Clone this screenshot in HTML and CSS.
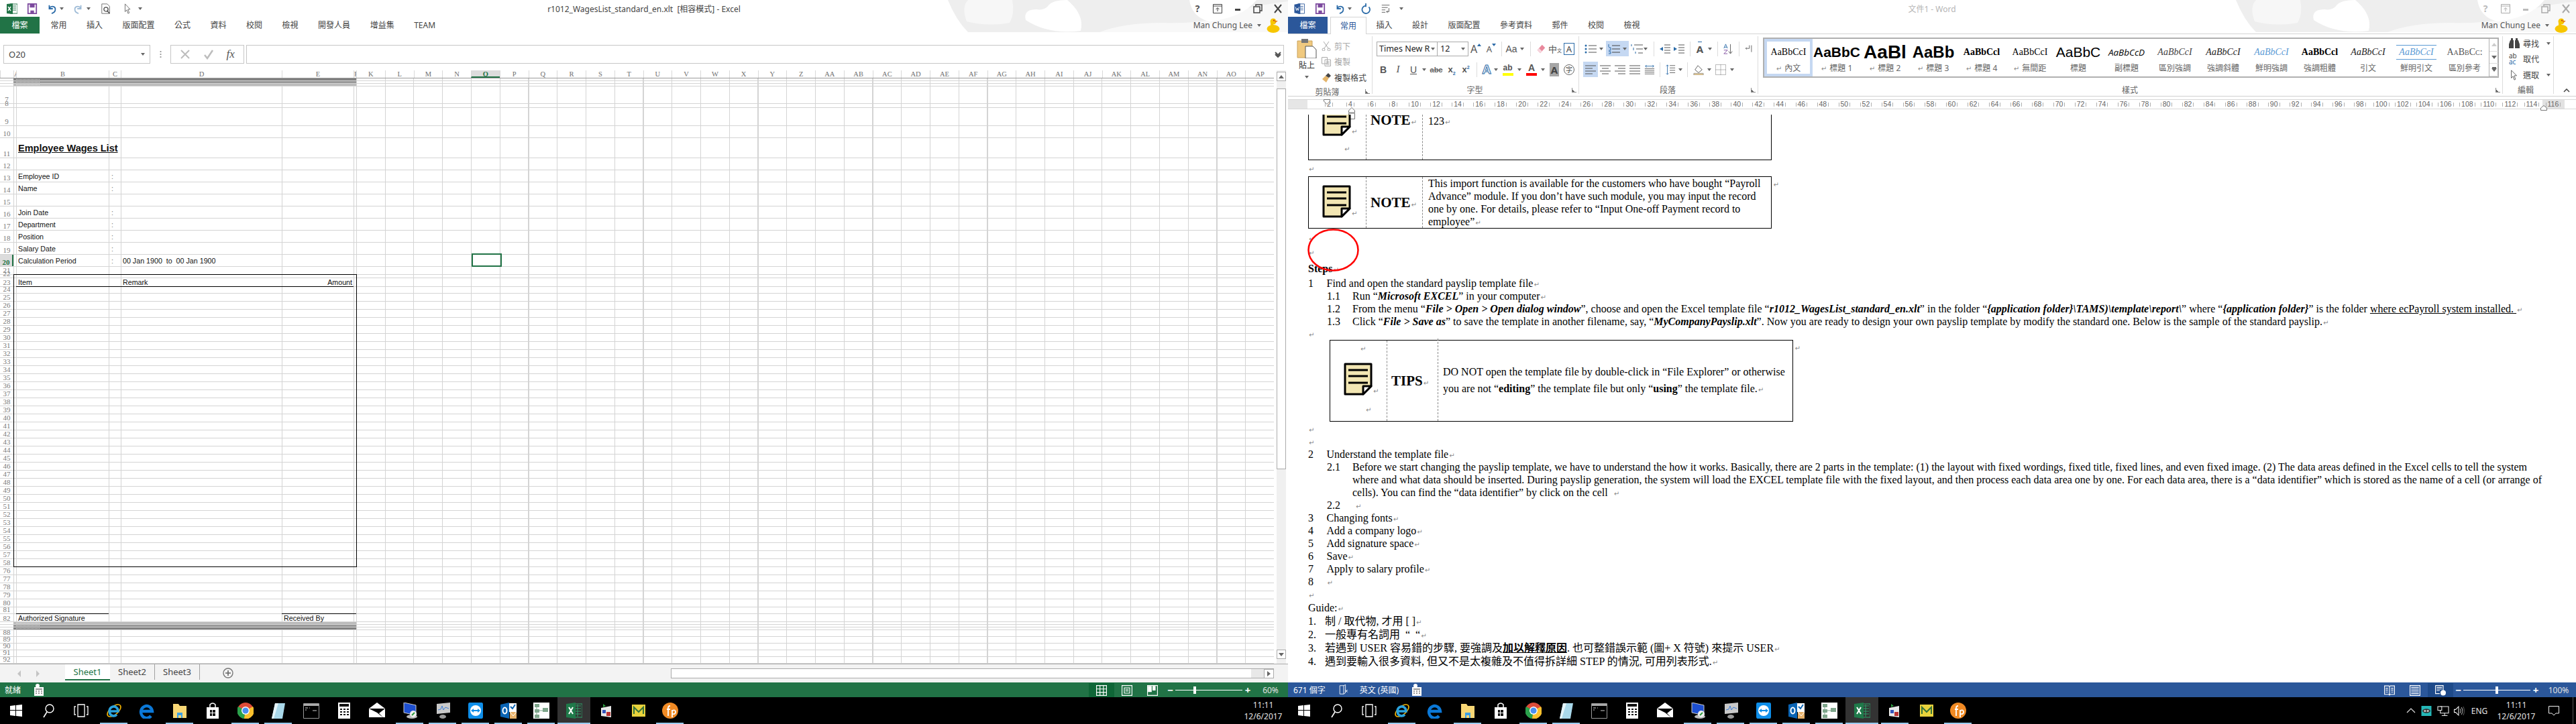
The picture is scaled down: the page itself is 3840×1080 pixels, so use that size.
FILE: index.html
```html
<!DOCTYPE html>
<html lang="en">
<head>
  <meta charset="UTF-8">
  <title>Excel and Word side by side</title>
  <link rel="stylesheet" href="styles.css">
</head>
<body>

<svg class="defs" aria-hidden="true">
  <symbol id="hearts" viewBox="0 0 507 48">
    <path d="M0 0H507V48H30Q12 30 0 0Z" fill="#eeeeee"/>
    <path d="M28 32Q20 10 30 0H96Q100 20 92 34Q60 40 28 32Z" fill="#f7f7f7"/>
    <path d="M116 30Q112 14 132 14Q144 16 150 8Q156 0 178 0Q204 22 198 46Q150 52 116 30Z" fill="#ffffff"/>
    <path d="M226 48Q262 34 320 34Q400 36 430 16Q470 6 507 2V48Z" fill="#f8f8f8"/>
    <path d="M360 0H460Q440 26 390 32Q364 26 360 0Z" fill="#ffffff"/>
  </symbol>
  <symbol id="note" viewBox="0 0 43 49">
    <path d="M2 2H41V35L29 47H2Z" fill="#f2e6b3" stroke="#000" stroke-width="3" stroke-linejoin="round"/>
    <path d="M7 11H36M7 20H36M7 30H36" stroke="#000" stroke-width="3"/>
    <path d="M29 47V35H41Z" fill="#fff" stroke="#000" stroke-width="3" stroke-linejoin="round"/>
  </symbol>
  <symbol id="save" viewBox="0 0 16 18">
    <path d="M1 1H15V17H1Z" fill="#fff" stroke="#7d4a9e" stroke-width="2"/>
    <path d="M4 1H12V7H4Z" fill="#7d4a9e"/>
    <path d="M5 12H11V17H5Z" fill="#7d4a9e"/>
  </symbol>
  <symbol id="undo" viewBox="0 0 16 18">
    <path d="M4 3V9H10M4 8C8 3 15 5 14 11C14 14 11 16 8 17" fill="none" stroke="#2b6ba8" stroke-width="2"/>
  </symbol>
  <symbol id="macro" viewBox="0 0 14 18">
    <path d="M0 5H14V18H0Z" fill="#fff"/>
    <circle cx="5" cy="3" r="3" fill="#fff"/>
    <path d="M2 8H12M2 11H4M6 11H8M10 11H12M2 14H4M6 14H8M10 14H12" stroke="#333" stroke-width="1.2"/>
  </symbol>
  <symbol id="t-start" viewBox="0 0 24 24">
    <path d="M3 5L11 4V11H3ZM12 4L21 3V11H12ZM3 12H11V20L3 19ZM12 12H21V21L12 20Z" fill="#fff"/>
  </symbol>
  <symbol id="t-search" viewBox="0 0 24 24">
    <circle cx="14" cy="9" r="6" fill="none" stroke="#fff" stroke-width="1.4"/>
    <path d="M10 14L5 22" stroke="#fff" stroke-width="1.6"/>
  </symbol>
  <symbol id="t-view" viewBox="0 0 24 24">
    <path d="M7 3H17V21H7ZM4 6H2V18H4M20 6H22V18H20" fill="none" stroke="#fff" stroke-width="1.3"/>
  </symbol>
  <symbol id="t-ie" viewBox="0 0 24 24">
    <ellipse cx="12" cy="12" rx="12" ry="6" transform="rotate(-40 12 12)" fill="none" stroke="#f4b400" stroke-width="1.6"/>
    <path d="M5 13H18A6.5 7 0 1 0 16 18" fill="none" stroke="#2ba3dd" stroke-width="3.6"/>
  </symbol>
  <symbol id="t-edge" viewBox="0 0 24 24">
    <path d="M3 13H20A8.5 9 0 1 0 18 20" fill="none" stroke="#0b78d7" stroke-width="4.4"/>
  </symbol>
  <symbol id="t-folder" viewBox="0 0 24 24">
    <path d="M2 2H10L12 5H22V23H2Z" fill="#f8d775"/>
    <path d="M8 15H16V23H14V19H10V23H8Z" fill="#3ba0e6"/>
  </symbol>
  <symbol id="t-store" viewBox="0 0 24 24">
    <path d="M3 7H21V24H3Z" fill="#fff"/>
    <path d="M8 7V3Q12 -1 16 3V7" fill="none" stroke="#fff" stroke-width="1.5"/>
    <path d="M8 11H11V15H8ZM12 11H16V15H12ZM8 16H11V20H8ZM12 16H16V20H12Z" fill="#111"/>
  </symbol>
  <symbol id="t-chrome" viewBox="0 0 24 24">
    <circle cx="12" cy="12" r="12" fill="#dd4b39"/>
    <path d="M12 12L1 6A12 12 0 0 0 10 24Z" fill="#2aa14b"/>
    <path d="M12 12L23 6A12 12 0 0 1 10 24Z" fill="#fbc02d"/>
    <circle cx="12" cy="12" r="6" fill="#fff"/>
    <circle cx="12" cy="12" r="4.6" fill="#4a8ef0"/>
  </symbol>
  <symbol id="t-note" viewBox="0 0 24 24">
    <path d="M7 1H22L18 24H2Z" fill="#a9d8ea"/>
    <path d="M7 1H12L5 24H2Z" fill="#e5f4f9"/>
  </symbol>
  <symbol id="t-cmd" viewBox="0 0 24 24">
    <path d="M.5 1.500H23.500V23.500H.5Z" fill="#000" stroke="#999"/>
    <path d="M1 2H23V5H1Z" fill="#aaa"/>
    <path d="M3 8H7M9 8H10M3 11H5M14 12H20" stroke="#ccc"/>
  </symbol>
  <symbol id="t-calc" viewBox="0 0 24 24">
    <path d="M3 0H21V24H3Z" fill="#fff"/>
    <path d="M5 2H19V6H5ZM6 9H9V11H6ZM11 9H14V11H11ZM16 9H19V11H16ZM6 13H9V15H6ZM11 13H14V15H11ZM16 13H19V15H16ZM6 17H9V19H6ZM11 17H14V19H11ZM16 17H19V19H16Z" fill="#111"/>
  </symbol>
  <symbol id="t-mail" viewBox="0 0 24 24">
    <path d="M0 9L12 0L24 9V22H0Z" fill="#fff"/>
    <path d="M0 9H24L15 16L22 23L12 15Z" fill="#000"/>
  </symbol>
  <symbol id="t-pc" viewBox="0 0 24 24">
    <path d="M3 0L21 4V19L3 15Z" fill="#1d4fd0" stroke="#ccc"/>
    <ellipse cx="15" cy="21" rx="8" ry="3" fill="#bbb"/>
    <circle cx="17" cy="17" r="5" fill="#eee"/>
    <path d="M15 19L19 15" stroke="#2a9a3c" stroke-width="2"/>
  </symbol>
  <symbol id="t-perf" viewBox="0 0 24 24">
    <path d="M3 2L23 0V15L3 17Z" fill="#c9c9c9"/>
    <path d="M5 11L9 10L11 5L13 11L16 7L21 9" fill="none" stroke="#3d7fd9"/>
    <ellipse cx="12" cy="21" rx="5" ry="3" fill="#999"/>
  </symbol>
  <symbol id="t-tv" viewBox="0 0 24 24">
    <path d="M3 0H21Q23 0 23 3V21Q23 24 21 24H3Q1 24 1 21V3Q1 0 3 0Z" fill="#0e8ee9"/>
    <circle cx="12" cy="12" r="8" fill="#fff"/>
    <path d="M5 12L9 9V11H15V9L19 12L15 15V13H9V15Z" fill="#0e8ee9"/>
  </symbol>
  <symbol id="t-ol" viewBox="0 0 24 24">
    <path d="M8 1H24V14H8Z" fill="#fff"/>
    <path d="M0 3L13 0V24L0 21Z" fill="#0a64b4"/>
    <ellipse cx="6.500" cy="12" rx="3" ry="4.400" fill="none" stroke="#fff" stroke-width="2"/>
    <path d="M15 6L18 9L22 3" fill="none" stroke="#0a64b4" stroke-width="2"/>
    <path d="M14 14H24V24H14Z" fill="#e8b26a"/>
    <path d="M14 14L19 20L24 14" fill="none" stroke="#fff"/>
  </symbol>
  <symbol id="t-tree" viewBox="0 0 24 24">
    <path d="M0 0H24V24H0Z" fill="#fff"/>
    <path d="M2 2H9V7H2ZM2 10H9V15H2ZM14 8H22V14H14ZM2 18H9V23H2Z" fill="#7fa68c"/>
    <path d="M5 7V20M5 12H18" stroke="#7fa68c"/>
  </symbol>
  <symbol id="t-xl" viewBox="0 0 24 24">
    <path d="M9 2H24V22H9Z" fill="none" stroke="#2fa36b"/>
    <path d="M12 5H22M12 9H22M12 13H22M12 17H22M17 3V21" stroke="#2fa36b"/>
    <path d="M0 2L14 0V24L0 22Z" fill="#1f7a4a"/>
    <path d="M4 7L10 17M10 7L4 17" stroke="#fff" stroke-width="2"/>
  </symbol>
  <symbol id="t-app" viewBox="0 0 24 24">
    <path d="M3 8L18 5V22L3 20Z" fill="#e8e8e8"/>
    <path d="M5 11H10V16H5Z" fill="#3355bb"/>
    <path d="M11 14H17V20H11Z" fill="#bb3333"/>
    <path d="M6 2L10 5L6 7" fill="#2a9a3c"/>
  </symbol>
  <symbol id="t-yel" viewBox="0 0 24 24">
    <path d="M2 3H22V21H2Z" fill="#e8d23c"/>
    <path d="M5 17V7L12 14L19 7V17" fill="none" stroke="#36733a" stroke-width="2"/>
  </symbol>
  <symbol id="t-fp" viewBox="0 0 24 24">
    <circle cx="12" cy="12" r="12" fill="#f08a24"/>
    <path d="M9 20V8Q9 5 12 5M7 10H12M15 22V11M15 12Q20 10 20 14T15 17" fill="none" stroke="#fff" stroke-width="1.800"/>
  </symbol>
</svg>

<main class="desktop">

  <!-- Excel -->
  <section class="window excel">
    <svg class="hearts"><use href="#hearts"/></svg>
    <header class="titlebar">
      <div class="qat qat-x">
        <svg class="i16" viewBox="0 0 16 16"><path d="M5 1H16V15H5Z" fill="#fff" stroke="#217346"/><path d="M9 4H14M9 7H14M9 10H14" stroke="#217346"/><path d="M0 1L9 0V16L0 15Z" fill="#217346"/><path d="M2 5L6 11M6 5L2 11" stroke="#fff" stroke-width="1.400"/></svg>
        <svg class="i16"><use href="#save"/></svg>
        <svg class="i16"><use href="#undo"/></svg>
        <span class="dd"></span>
        <svg class="i16 faded"><use href="#undo" transform="matrix(-1 0 0 1 16 0)"/></svg>
        <span class="dd"></span>
        <svg class="i16" viewBox="0 0 16 18"><path d="M1 1H10L14 5V17H1Z" fill="#fff" stroke="#666"/><circle cx="8" cy="10" r="3.500" fill="none" stroke="#444" stroke-width="1.400"/><path d="M10.500 13L14 17" stroke="#444" stroke-width="1.600"/></svg>
        <svg class="i16" viewBox="0 0 10 18"><path d="M1 1V14L4 11L6 17L8 16L6 10H9.500Z" fill="#fff" stroke="#666"/></svg>
        <span class="dd dd-line"></span>
      </div>
      <div class="doc-title">r1012_WagesList_standard_en.xlt &nbsp;[相容模式] - Excel</div>
      <div class="win-ctl">
        <span class="ctl-q">?</span>
        <svg class="i14" viewBox="0 0 14 14"><path d="M.5 .5H13.500V13.500H.5ZM1 3H13" fill="none" stroke="#444"/><path d="M7 11V6M4.500 8L7 5.500L9.500 8" fill="none" stroke="#444"/></svg>
        <span class="ctl-min"></span>
        <svg class="i14" viewBox="0 0 14 14"><path d="M4 3V1H13V10H10M1 4H10V13H1Z" fill="none" stroke="#444" stroke-width="1.500"/></svg>
        <svg class="i14" viewBox="0 0 14 14"><path d="M2 1L12 13M12 1L2 13" stroke="#444" stroke-width="2"/></svg>
      </div>
    </header>
    <nav class="tabs-row">
      <span class="file-tab">檔案</span>
      <span class="tab">常用</span>
      <span class="tab">插入</span>
      <span class="tab">版面配置</span>
      <span class="tab">公式</span>
      <span class="tab">資料</span>
      <span class="tab">校閱</span>
      <span class="tab">檢視</span>
      <span class="tab">開發人員</span>
      <span class="tab">增益集</span>
      <span class="tab">TEAM</span>
      <div class="user">
        <span>Man Chung Lee</span>
        <span class="dd"></span>
        <svg class="duck" viewBox="0 0 20 22"><ellipse cx="10" cy="16" rx="9.500" ry="6" fill="#f7c600"/><circle cx="10" cy="5" r="4.500" fill="#f7c600"/><path d="M6 6H10V14H6Z" fill="#f7c600"/><path d="M12 4H17L13 7Z" fill="#e8791a"/><circle cx="11" cy="3.500" r="1" fill="#c02020"/></svg>
      </div>
    </nav>

    <div class="formula-bar">
      <div class="name-box"><span>O20</span><span class="dd"></span></div>
      <div class="fx-dots"></div>
      <div class="fx-btns">
        <svg class="i16" viewBox="0 0 16 16"><path d="M2 2L14 14M14 2L2 14" stroke="#bdbdbd" stroke-width="2"/></svg>
        <svg class="i16" viewBox="0 0 16 16"><path d="M2 9L6 14L14 2" fill="none" stroke="#bdbdbd" stroke-width="2.500"/></svg>
        <i class="fx">fx</i>
      </div>
      <div class="fx-input"><svg class="i10" viewBox="0 0 10 10"><path d="M1 2L5 6L9 2M1 5L5 9L9 5" fill="none" stroke="#555" stroke-width="2"/></svg></div>
    </div>

    <div class="sheet">
      <div class="cells">
        <div class="colhead">
          <span></span><span>A</span><span>B</span><span>C</span><span>D</span><span>E</span><span>F</span>
          <span>K</span><span>L</span><span>M</span><span>N</span><span class="cur">O</span><span>P</span><span>Q</span><span>R</span><span>S</span><span>T</span><span>U</span><span>V</span><span>W</span><span>X</span><span>Y</span><span>Z</span>
          <span>AA</span><span>AB</span><span>AC</span><span>AD</span><span>AE</span><span>AF</span><span>AG</span><span>AH</span><span>AI</span><span>AJ</span><span>AK</span><span>AL</span><span>AM</span><span>AN</span><span>AO</span><span>AP</span>
        </div>
        <div class="rows">
          <div class="row tiny"><b></b><em class="bar b1"></em></div>
          <div class="row tiny"><b></b><em class="bar b2"></em></div>
          <div class="row tiny"><b></b><em class="bar b3"></em></div>
          <div class="row h26"><b>7</b></div>
          <div class="row h6"><b>8</b></div>
          <div class="row h27"><b>9</b></div>
          <div class="row h18"><b>10</b></div>
          <div class="row h30"><b>11</b><span class="cb title">Employee Wages List</span></div>
          <div class="row h18"><b>12</b></div>
          <div class="row h18"><b>13</b><span class="cb">Employee ID</span><span class="cc">:</span></div>
          <div class="row h18"><b>14</b><span class="cb">Name</span><span class="cc">:</span></div>
          <div class="row h18"><b>15</b></div>
          <div class="row h18"><b>16</b><span class="cb">Join Date</span><span class="cc">:</span></div>
          <div class="row h18"><b>17</b><span class="cb">Department</span><span class="cc">:</span></div>
          <div class="row h18"><b>18</b><span class="cb">Position</span><span class="cc">:</span></div>
          <div class="row h18"><b>19</b><span class="cb">Salary Date</span><span class="cc">:</span></div>
          <div class="row h18 cur"><b>20</b><span class="cb">Calculation Period</span><span class="cc">:</span><span class="cd">00 Jan 1900 &nbsp;to &nbsp;00 Jan 1900</span></div>
          <div class="row h12"><b>21</b></div>
          <div class="row h5"><b>22</b></div>
          <div class="row h13 head"><b>23</b><span class="cb">Item</span><span class="cc"></span><span class="cd">Remark</span><span class="ce">Amount</span></div>
          <div class="row h10"><b>24</b></div>
          <div class="row h12"><b>25</b></div><div class="row h12"><b>26</b></div><div class="row h12"><b>27</b></div><div class="row h12"><b>28</b></div>
          <div class="row h12"><b>29</b></div><div class="row h12"><b>30</b></div><div class="row h12"><b>31</b></div><div class="row h12"><b>32</b></div>
          <div class="row h12"><b>33</b></div><div class="row h12"><b>34</b></div><div class="row h12"><b>35</b></div><div class="row h12"><b>36</b></div>
          <div class="row h12"><b>37</b></div><div class="row h12"><b>38</b></div><div class="row h12"><b>39</b></div><div class="row h12"><b>40</b></div>
          <div class="row h12"><b>41</b></div><div class="row h12"><b>42</b></div><div class="row h12"><b>43</b></div><div class="row h12"><b>44</b></div>
          <div class="row h12"><b>45</b></div><div class="row h12"><b>46</b></div><div class="row h12"><b>47</b></div><div class="row h12"><b>48</b></div>
          <div class="row h12"><b>49</b></div><div class="row h12"><b>50</b></div><div class="row h12"><b>51</b></div><div class="row h12"><b>52</b></div>
          <div class="row h12"><b>53</b></div><div class="row h12"><b>54</b></div><div class="row h12"><b>55</b></div><div class="row h12"><b>56</b></div>
          <div class="row h12"><b>57</b></div><div class="row h12"><b>58</b></div>
          <div class="row h12"><b>76</b></div><div class="row h12"><b>77</b></div><div class="row h12"><b>78</b></div><div class="row h12"><b>79</b></div><div class="row h12"><b>80</b></div>
          <div class="row h10"><b>81</b></div>
          <div class="row h12 sig"><b>82</b><span class="cb">Authorized Signature</span><span class="cc"></span><span class="cd"></span><span class="cs">Received By</span><span class="cf"></span></div>
          <div class="row tiny"><b></b><em class="bar b3"></em></div>
          <div class="row tiny"><b></b><em class="bar b2"></em></div>
          <div class="row tiny"><b></b><em class="bar b1"></em></div>
          <div class="row h10"><b>88</b></div><div class="row h10"><b>89</b></div><div class="row h10"><b>90</b></div><div class="row h10"><b>91</b></div><div class="row h10"><b>92</b></div><div class="row h10"><b>93</b></div>
        </div>
        <div class="wage-box"></div>
        <div class="cell-cursor"></div>
      </div>
      <div class="vscroll">
        <span class="sb-btn"><span class="tri up"></span></span>
        <span class="sb-thumb"></span>
        <span class="sb-btn"><span class="tri down"></span></span>
      </div>
    </div>

    <div class="sheet-tabs">
      <span class="arrow left"></span>
      <span class="arrow right"></span>
      <span class="stab on">Sheet1</span>
      <span class="stab">Sheet2</span>
      <span class="stab">Sheet3</span>
      <svg class="add-sheet" viewBox="0 0 16 16"><circle cx="8" cy="8" r="7" fill="none" stroke="#777" stroke-width="1.400"/><path d="M8 4V12M4 8H12" stroke="#666" stroke-width="1.600"/></svg>
      <div class="hscroll"><span class="h-thumb"></span><span class="h-track"></span><span class="sb-btn"><span class="tri rgt"></span></span></div>
    </div>

    <footer class="status">
      <span class="st-text">就緒</span>
      <svg class="st-macro"><use href="#macro"/></svg>
      <div class="st-right">
        <span class="view on"><svg class="i16" viewBox="0 0 14 14"><path d="M.5 .5H13.500V13.500H.5ZM.5 5H13.500M.5 9.500H13.500M5 .5V13.500M9.500 .5V13.500" fill="none" stroke="#fff"/></svg></span>
        <span class="view"><svg class="i16" viewBox="0 0 14 14"><path d="M.5 .5H13.500V13.500H.5ZM3.500 3.500H10.500V10.500H3.500ZM5 5.500H9M5 7.500H9" fill="none" stroke="#fff"/></svg></span>
        <span class="view"><svg class="i16" viewBox="0 0 14 14"><path d="M.5 .5H13.500V13.500H.5Z" fill="none" stroke="#fff"/><path d="M1 1H6V9H1ZM7 1H11V7H7Z" fill="#fff"/></svg></span>
        <span class="z-btn">−</span>
        <span class="slider"><span class="knob k60"></span></span>
        <span class="z-btn">+</span>
        <span class="pct">60%</span>
      </div>
    </footer>

    <div class="taskbar">
      <span class="tk first"><svg><use href="#t-start"/></svg></span>
      <span class="tk"><svg><use href="#t-search"/></svg></span>
      <span class="tk"><svg><use href="#t-view"/></svg></span>
      <span class="tk run"><svg><use href="#t-ie"/></svg></span>
      <span class="tk"><svg><use href="#t-edge"/></svg></span>
      <span class="tk run"><svg><use href="#t-folder"/></svg></span>
      <span class="tk"><svg><use href="#t-store"/></svg></span>
      <span class="tk run"><svg><use href="#t-chrome"/></svg></span>
      <span class="tk run"><svg><use href="#t-note"/></svg></span>
      <span class="tk"><svg><use href="#t-cmd"/></svg></span>
      <span class="tk"><svg><use href="#t-calc"/></svg></span>
      <span class="tk"><svg><use href="#t-mail"/></svg></span>
      <span class="tk run"><svg><use href="#t-pc"/></svg></span>
      <span class="tk run"><svg><use href="#t-perf"/></svg></span>
      <span class="tk run"><svg><use href="#t-tv"/></svg></span>
      <span class="tk run"><svg><use href="#t-ol"/></svg></span>
      <span class="tk run"><svg><use href="#t-tree"/></svg></span>
      <span class="tk run active"><svg><use href="#t-xl"/></svg></span>
      <span class="tk"><svg><use href="#t-app"/></svg></span>
      <span class="tk narrow"><svg><use href="#t-yel"/></svg></span>
      <span class="tk run"><svg><use href="#t-fp"/></svg></span>
      <div class="tray"><div class="clock">11:11<br>12/6/2017</div></div>
    </div>
  </section>

  <!-- Word -->
  <section class="window word">
    <svg class="hearts"><use href="#hearts"/></svg>
    <header class="titlebar">
      <div class="qat qat-w">
        <svg class="i16" viewBox="0 0 17 18"><path d="M6 1H17V17H6Z" fill="#fff" stroke="#2b579a"/><path d="M10 5H15M10 8H15M10 11H15" stroke="#2b579a"/><path d="M0 2L10 0V18L0 16Z" fill="#2b579a"/><path d="M2 6L3.500 12L5 8L6.500 12L8 6" fill="none" stroke="#fff"/></svg>
        <svg class="i16"><use href="#save"/></svg>
        <svg class="i16"><use href="#undo"/></svg>
        <span class="dd"></span>
        <svg class="i16" viewBox="0 0 16 18"><path d="M8 4A6.500 6.500 0 1 0 13 6M8 0V6" fill="none" stroke="#2b6ba8" stroke-width="2"/></svg>
        <svg class="i16" viewBox="0 0 16 18"><path d="M1 3H14M1 7H11M1 11H7M1 15H7M13 8V14H9M9 14L11 12M9 14L11 16" fill="none" stroke="#555"/></svg>
        <span class="dd dd-line"></span>
      </div>
      <div class="doc-title faded-title">文件1 - Word</div>
      <div class="win-ctl dim">
        <span class="ctl-q">?</span>
        <svg class="i14" viewBox="0 0 14 14"><path d="M.5 .5H13.500V13.500H.5ZM1 3H13" fill="none" stroke="#aaa"/><path d="M7 11V6M4.500 8L7 5.500L9.500 8" fill="none" stroke="#aaa"/></svg>
        <span class="ctl-min"></span>
        <svg class="i14" viewBox="0 0 14 14"><path d="M4 3V1H13V10H10M1 4H10V13H1Z" fill="none" stroke="#aaa" stroke-width="1.500"/></svg>
        <svg class="i14" viewBox="0 0 14 14"><path d="M2 1L12 13M12 1L2 13" stroke="#aaa" stroke-width="2"/></svg>
      </div>
    </header>
    <nav class="tabs-row lined">
      <span class="file-tab">檔案</span>
      <span class="tab cur-tab">常用</span>
      <span class="tab">插入</span>
      <span class="tab">設計</span>
      <span class="tab">版面配置</span>
      <span class="tab">參考資料</span>
      <span class="tab">郵件</span>
      <span class="tab">校閱</span>
      <span class="tab">檢視</span>
      <div class="user">
        <span>Man Chung Lee</span>
        <span class="dd"></span>
        <svg class="duck" viewBox="0 0 20 22"><ellipse cx="10" cy="16" rx="9.500" ry="6" fill="#f7c600"/><circle cx="10" cy="5" r="4.500" fill="#f7c600"/><path d="M6 6H10V14H6Z" fill="#f7c600"/><path d="M12 4H17L13 7Z" fill="#e8791a"/><circle cx="11" cy="3.500" r="1" fill="#c02020"/></svg>
      </div>
    </nav>

    <div class="ribbon">
      <div class="group g-clip">
        <div class="clip-body">
          <div class="paste">
            <svg class="paste-ic" viewBox="0 0 30 30"><path d="M1 4H23V29H1Z" fill="#f0c97f" stroke="#c9a25a"/><path d="M7 1H17V7H7Z" fill="#777"/><path d="M13 12H24L29 17V30H13Z" fill="#fff" stroke="#555"/></svg>
            <span>貼上</span>
            <span class="dd"></span>
          </div>
          <div class="clip-list">
            <div class="off"><svg class="i14" viewBox="0 0 14 14"><circle cx="3" cy="12" r="2" fill="none" stroke="#aaa"/><circle cx="11" cy="12" r="2" fill="none" stroke="#aaa"/><path d="M4 10L11 0M10 10L3 0" stroke="#aaa"/></svg>剪下</div>
            <div class="off"><svg class="i14" viewBox="0 0 14 14"><path d="M.5 .5H8.500V10H.5ZM5 4H13.500V13.500H5Z" fill="#fff" stroke="#aaa"/><path d="M7 7H12M7 9H12M7 11H12" stroke="#aaa"/></svg>複製</div>
            <div><svg class="i14" viewBox="0 0 14 14"><path d="M1 9L7 14L11 7L6 4Z" fill="#e4b56b"/><path d="M6 4L10 0L14 4L11 7Z" fill="#444"/></svg>複製格式</div>
          </div>
        </div>
        <div class="glabel"><i></i><span>剪貼簿</span><em class="launch"></em></div>
      </div>

      <div class="group g-font">
        <div class="tool-rows">
          <div class="tr font-r1">
            <div class="combo"><span class="c1">Times New R<span class="dd"></span></span><span class="c2">12<span class="dd"></span></span></div>
            <span class="big-a">A<sup class="arr-up"></sup></span>
            <span class="big-a sm">A<sup class="arr-dn"></sup></span>
            <i class="sep"></i>
            <span class="tool-t">Aa</span>
            <span class="dd"></span>
            <i class="sep"></i>
            <svg class="i16" viewBox="0 0 16 18"><path d="M2 11L10 2L15 7L7 16Z" fill="#e9889c"/><path d="M2 11L5 8L10 13L7 16Z" fill="#f7d7de"/></svg>
            <span class="tool-cn">中<small>文</small></span>
            <span class="boxed-a">A</span>
          </div>
          <div class="tr font-r2">
            <b class="tool-t">B</b>
            <i class="tool-t serif">I</i>
            <u class="tool-t">U</u>
            <span class="dd"></span>
            <s class="tool-s">abc</s>
            <b class="tool-t small">x<sub>2</sub></b>
            <b class="tool-t small">x<sup>2</sup></b>
            <i class="sep"></i>
            <span class="a-out">A</span>
            <span class="dd"></span>
            <span class="a-bar yel">ab</span>
            <span class="dd"></span>
            <span class="a-bar red">A</span>
            <span class="dd"></span>
            <span class="a-gray">A</span>
            <span class="circ-zi">字</span>
          </div>
        </div>
        <div class="glabel"><i></i><span>字型</span><em class="launch"></em></div>
      </div>

      <div class="group g-para">
        <div class="tool-rows">
          <div class="tr para-r1">
            <svg class="i18" viewBox="0 0 18 16"><path d="M6 3H18M6 8H18M6 13H18" stroke="#555"/><circle cx="2" cy="3" r="1.500" fill="#2b6ba8"/><circle cx="2" cy="8" r="1.500" fill="#2b6ba8"/><circle cx="2" cy="13" r="1.500" fill="#2b6ba8"/></svg>
            <span class="dd"></span>
            <i></i>
            <span class="sel-bg"><svg class="i18" viewBox="0 0 18 16"><path d="M6 3H18M6 8H18M6 13H18" stroke="#444"/><path d="M1 1V5M1 6H4V10H1M1 12H4V15H1" fill="none" stroke="#2b6ba8"/></svg><span class="dd"></span></span>
            <i></i>
            <svg class="i18" viewBox="0 0 18 16"><path d="M5 2H18M8 8H18M11 14H18" stroke="#555"/><path d="M1 1V4M4 6V10M7 12V15" stroke="#2b6ba8"/></svg>
            <span class="dd"></span>
            <i class="sep"></i>
            <svg class="i16" viewBox="0 0 16 14"><path d="M7 1H16M7 5H16M7 9H16M7 13H16" stroke="#555"/><path d="M5 4V10L0 7Z" fill="#2b6ba8"/></svg>
            <svg class="i16" viewBox="0 0 16 14"><path d="M7 1H16M7 5H16M7 9H16M7 13H16" stroke="#555"/><path d="M0 4V10L5 7Z" fill="#2b6ba8"/></svg>
            <i class="sep"></i>
            <span class="tool-dir">A</span>
            <span class="dd"></span>
            <i class="sep"></i>
            <svg class="i16" viewBox="0 0 16 18"><path d="M1 8L4 1L7 8M2 6H6" fill="none" stroke="#2b6ba8"/><path d="M1 11H7L1 17H7" fill="none" stroke="#7d4a9e"/><path d="M12 1V16M9 13L12 17L15 13" fill="none" stroke="#555"/></svg>
            <i class="sep"></i>
            <svg class="i14" viewBox="0 0 14 18"><path d="M8 2V8H3L1 8M12 2V15M3 6L1 8L3 10" fill="none" stroke="#444"/></svg>
          </div>
          <div class="tr para-r2">
            <span class="sel-bg wide"><svg class="i16" viewBox="0 0 16 14"><path d="M0 1H16M0 5H11M0 9H16M0 13H11" stroke="#555"/></svg></span>
            <svg class="i16" viewBox="0 0 16 14"><path d="M0 1H16M3 5H13M0 9H16M3 13H13" stroke="#555"/></svg>
            <svg class="i16" viewBox="0 0 16 14"><path d="M0 1H16M5 5H16M0 9H16M5 13H16" stroke="#555"/></svg>
            <svg class="i16" viewBox="0 0 16 14"><path d="M0 1H16M0 5H16M0 9H16M0 13H16" stroke="#555"/></svg>
            <svg class="i16" viewBox="0 0 16 18"><path d="M0 7H16M0 10H16M0 13H16M0 16H16" stroke="#555"/><path d="M1 3H15M1 3L3 1M1 3L3 5M15 3L13 1M15 3L13 5" fill="none" stroke="#2b6ba8"/></svg>
            <i class="sep"></i>
            <svg class="i16" viewBox="0 0 16 18"><path d="M7 2H16M7 6H16M7 10H16M7 14H16" stroke="#555"/><path d="M3 1V17M1 3L3 1L5 3M1 15L3 17L5 15" fill="none" stroke="#2b6ba8"/></svg>
            <span class="dd"></span>
            <i class="sep"></i>
            <svg class="i16" viewBox="0 0 16 18"><path d="M7 2L14 9L8 14L2 9Z" fill="#fff" stroke="#555"/><path d="M0 15H16V18H0Z" fill="#e8c98a" stroke="#999"/></svg>
            <span class="dd"></span>
            <svg class="i16" viewBox="0 0 16 16"><path d="M.5 .5H15.500V15.500H.5ZM.5 8H15.500M8 .5V15.500" fill="none" stroke="#777" stroke-dasharray="1 1"/></svg>
            <span class="dd"></span>
          </div>
        </div>
        <div class="glabel"><i></i><span>段落</span><em class="launch"></em></div>
      </div>

      <div class="group g-styles">
        <div class="gallery">
          <div class="gal-item on"><div class="smp s-normal">AaBbCcI</div><div class="gal-label"><span class="pm">↵</span> 內文</div></div>
          <div class="gal-item"><div class="smp s-h1">AaBbC</div><div class="gal-label"><span class="pm">↵</span> 標題 1</div></div>
          <div class="gal-item"><div class="smp s-h2">AaBl</div><div class="gal-label"><span class="pm">↵</span> 標題 2</div></div>
          <div class="gal-item"><div class="smp s-h3">AaBb</div><div class="gal-label"><span class="pm">↵</span> 標題 3</div></div>
          <div class="gal-item"><div class="smp s-h4">AaBbCcl</div><div class="gal-label"><span class="pm">↵</span> 標題 4</div></div>
          <div class="gal-item"><div class="smp s-normal">AaBbCcI</div><div class="gal-label"><span class="pm">↵</span> 無間距</div></div>
          <div class="gal-item"><div class="smp s-title">AaBbC</div><div class="gal-label">標題</div></div>
          <div class="gal-item"><div class="smp s-sub">AaBbCcD</div><div class="gal-label">副標題</div></div>
          <div class="gal-item"><div class="smp s-em1">AaBbCcI</div><div class="gal-label">區別強調</div></div>
          <div class="gal-item"><div class="smp s-em2">AaBbCcI</div><div class="gal-label">強調斜體</div></div>
          <div class="gal-item"><div class="smp s-em3">AaBbCcI</div><div class="gal-label">鮮明強調</div></div>
          <div class="gal-item"><div class="smp s-h4">AaBbCcl</div><div class="gal-label">強調粗體</div></div>
          <div class="gal-item"><div class="smp s-em2">AaBbCcI</div><div class="gal-label">引文</div></div>
          <div class="gal-item"><div class="smp s-em3 lined-smp">AaBbCcI</div><div class="gal-label">鮮明引文</div></div>
          <div class="gal-item"><div class="smp s-ref">AaBbCc:</div><div class="gal-label">區別參考</div></div>
          <div class="gal-scroll">
            <span><span class="tri up pale"></span></span>
            <span><span class="tri down"></span></span>
            <span><span class="tri down barred"></span></span>
          </div>
        </div>
        <div class="glabel"><i></i><span>樣式</span><em class="launch"></em></div>
      </div>

      <div class="group g-edit">
        <div class="edit-list">
          <div><svg class="i16" viewBox="0 0 16 16"><path d="M2 3H7V15H0V9ZM9 3H14L16 9V15H9Z" fill="#444"/><path d="M3 0H6V3H3ZM10 0H13V3H10Z" fill="#444"/></svg>尋找<span class="dd"></span></div>
          <div><span class="ab-ac">ab<br><b>ac</b></span>取代</div>
          <div><svg class="i16" viewBox="0 0 12 18"><path d="M1 1V14L4 11L6 17L8 16L6 10H10Z" fill="#fff" stroke="#555"/></svg>選取<span class="dd"></span></div>
        </div>
        <div class="glabel"><i></i><span>編輯</span><i></i></div>
      </div>

      <svg class="collapse" viewBox="0 0 10 6"><path d="M1 5L5 1L9 5" fill="none" stroke="#444" stroke-width="1.500"/></svg>
    </div>

    <div class="ruler">
      <span class="r-left"></span>
      <div class="r-nums">
        <span>2</span><span>4</span><span>6</span><span>8</span><span>10</span><span>12</span><span>14</span><span>16</span><span>18</span><span>20</span>
        <span>22</span><span>24</span><span>26</span><span>28</span><span>30</span><span>32</span><span>34</span><span>36</span><span>38</span><span>40</span>
        <span>42</span><span>44</span><span>46</span><span>48</span><span>50</span><span>52</span><span>54</span><span>56</span><span>58</span><span>60</span>
        <span>62</span><span>64</span><span>66</span><span>68</span><span>70</span><span>72</span><span>74</span><span>76</span><span>78</span><span>80</span>
        <span>82</span><span>84</span><span>86</span><span>88</span><span>90</span><span>92</span><span>94</span><span>96</span><span>98</span><span>100</span>
        <span>102</span><span>104</span><span>106</span><span>108</span><span>110</span><span>112</span><span>114</span><span>116</span>
      </div>
      <svg class="marker m-top" viewBox="0 0 10 8"><path d="M.5 .5H9.500V3L5 7.500L.5 3Z" fill="#fff" stroke="#777"/></svg>
      <svg class="marker m-hang" viewBox="0 0 10 18"><path d="M.5 5L5 .5L9.500 5V8H.5ZM.5 9H9.500V17.500H.5Z" fill="#fff" stroke="#777"/></svg>
      <svg class="marker m-right" viewBox="0 0 10 8"><path d="M.5 7.500V4L5 .5L9.500 4V7.500Z" fill="#fff" stroke="#777"/></svg>
    </div>

    <article class="doc">
      <div class="notebox clipped">
        <div class="nc nc-icon">
          <div class="ic-line"><svg class="note-ic cut" viewBox="0 17 43 32"><use href="#note" width="43" height="49"/></svg><span class="pm">↵</span></div>
          <span class="pm under">↵</span>
        </div>
        <div class="nc"><span class="nt">NOTE<span class="pm">↵</span></span></div>
        <div class="nc nc-text">123<span class="pm">↵</span></div>
      </div>
      <div class="ln h24"><span class="pm">↵</span></div>
      <div class="notebox n2">
        <div class="nc nc-icon"><div class="ic-line"><svg class="note-ic"><use href="#note"/></svg><span class="pm">↵</span></div></div>
        <div class="nc mid"><span class="nt">NOTE<span class="pm">↵</span></span></div>
        <div class="nc nc-text">This import function is available for the customers who have bought “Payroll<br>Advance” module. If you don’t have such module, you may input the record<br>one by one. For details, please refer to “Input One-off Payment record to<br>employee”<span class="pm">↵</span></div>
        <span class="pm side">↵</span>
      </div>
      <div class="ln h20 mt4"><span class="pm">↵</span></div>
      <div class="ln h22"><span class="pm">↵</span></div>
      <div class="ln h20 mt4 steps"><b>Steps</b><span class="pm">↵</span></div>
      <div class="ln mt2"><span class="n1">1</span>Find and open the standard payslip template file<span class="pm">↵</span></div>
      <div class="sub"><span>1.1</span><div>Run “<b><i>Microsoft EXCEL</i></b>” in your computer<span class="pm">↵</span></div></div>
      <div class="sub"><span>1.2</span><div>From the menu “<b><i>File &gt; Open &gt; Open dialog window</i></b>”, choose and open the Excel template file “<b><i>r1012_WagesList_standard_en.xlt</i></b>” in the folder “<b><i>{application folder}\TAMS)\template\report\</i></b>” where “<b><i>{application folder}</i></b>” is the folder <u>where ecPayroll system installed. </u> <span class="pm">↵</span></div></div>
      <div class="sub"><span>1.3</span><div>Click “<b><i>File &gt; Save as</i></b>” to save the template in another filename, say, “<b><i>MyCompanyPayslip.xlt</i></b>”. Now you are ready to design your own payslip template by modify the standard one. Below is the sample of the standard payslip.<span class="pm">↵</span></div></div>
      <div class="ln h18"><span class="pm">↵</span></div>
      <div class="notebox tips">
        <div class="nc nc-icon">
          <span class="pm">↵</span>
          <div class="ic-line"><svg class="note-ic"><use href="#note"/></svg><span class="pm">↵</span></div>
          <span class="pm">↵</span>
        </div>
        <div class="nc mid"><span class="nt">TIPS<span class="pm">↵</span></span></div>
        <div class="nc mid nc-tips"><div>DO NOT open the template file by double-click in “File Explorer” or otherwise<br>you are not “<b>editing</b>” the template file but only “<b>using</b>” the template file.<span class="pm">↵</span></div></div>
        <span class="pm side">↵</span>
      </div>
      <div class="ln h21"><span class="pm">↵</span></div>
      <div class="ln h18"><span class="pm">↵</span></div>
      <div class="ln"><span class="n1">2</span>Understand the template file<span class="pm">↵</span></div>
      <div class="sub multi"><span>2.1</span><div>Before we start changing the payslip template, we have to understand the how it works. Basically, there are 2 parts in the template: (1) the layout with fixed wordings, fixed title, fixed lines, and even fixed image. (2) The data areas defined in the Excel cells to tell the system<br>where and what data should be inserted. During payslip generation, the system will load the EXCEL template file with the fixed layout, and then process each data area one by one. For each data area, there is a “data identifier” which is stored as the name of a cell (or arrange of<br>cells). You can find the “data identifier” by click on the cell &nbsp;<span class="pm">↵</span></div></div>
      <div class="sub"><span>2.2</span><div>&nbsp;<span class="pm">↵</span></div></div>
      <div class="ln"><span class="n1">3</span>Changing fonts<span class="pm">↵</span></div>
      <div class="ln"><span class="n1">4</span>Add a company logo<span class="pm">↵</span></div>
      <div class="ln"><span class="n1">5</span>Add signature space<span class="pm">↵</span></div>
      <div class="ln"><span class="n1">6</span>Save<span class="pm">↵</span></div>
      <div class="ln"><span class="n1">7</span>Apply to salary profile<span class="pm">↵</span></div>
      <div class="ln"><span class="n1">8</span><span class="pm">↵</span></div>
      <div class="ln h20"><span class="pm">↵</span></div>
      <div class="ln h20">Guide:<span class="pm">↵</span></div>
      <div class="ln h20"><span class="n3">1.</span>制 / 取代物, 才用 [ ]<span class="pm">↵</span></div>
      <div class="ln h20"><span class="n3">2.</span>一般專有名詞用 &nbsp;“ &nbsp;“<span class="pm">↵</span></div>
      <div class="ln h20"><span class="n3">3.</span>若遇到 USER 容易錯的步驟, 要強調及<b><u>加以解釋原因</u></b>. 也可整錯誤示範 (圖+ X 符號) 來提示 USER<span class="pm">↵</span></div>
      <div class="ln h20"><span class="n3">4.</span>遇到要輸入很多資料, 但又不是太複雜及不值得拆詳細 STEP 的情況, 可用列表形式.<span class="pm">↵</span></div>
      <svg class="red-ring" viewBox="0 0 77 64"><ellipse cx="38.500" cy="32" rx="37" ry="30.500" fill="none" stroke="#f00" stroke-width="2.500"/></svg>
    </article>

    <footer class="status">
      <span class="st-text wc">671 個字</span>
      <svg class="i16 st-book" viewBox="0 0 14 18"><path d="M.5 2H7V16H.5ZM7 2L10 .5V14L7 16" fill="none" stroke="#fff"/><path d="M10 9L13.500 13M13.500 9L10 13" stroke="#fff"/></svg>
      <span class="st-text lang">英文 (英國)</span>
      <svg class="st-macro"><use href="#macro"/></svg>
      <div class="st-right">
        <span class="view"><svg class="i16" viewBox="0 0 14 14"><path d="M.5 1H6L7 2L8 1H13.500V12H8L7 13L6 12H.5ZM7 2V13M2 4H5M2 6.500H5M2 9H5M9 4H12M9 6.500H12M9 9H12" fill="none" stroke="#fff"/></svg></span>
        <span class="view"><svg class="i16" viewBox="0 0 14 14"><path d="M.5 .5H13.500V13.500H.5ZM2 3H12M2 5H12M2 7H12M2 9H12M2 11H12" fill="none" stroke="#fff"/></svg></span>
        <span class="view on-w"><svg class="i16" viewBox="0 0 14 14"><path d="M.5 .5H10.500V8M.5 .5V11H6M2 3H9M2 5H9M2 7H6" fill="none" stroke="#fff"/><circle cx="10.500" cy="10" r="3.500" fill="#fff"/></svg></span>
        <span class="z-btn">−</span>
        <span class="slider"><span class="knob k100"></span></span>
        <span class="z-btn">+</span>
        <span class="pct">100%</span>
      </div>
    </footer>

    <div class="taskbar">
      <span class="tk first"><svg><use href="#t-start"/></svg></span>
      <span class="tk"><svg><use href="#t-search"/></svg></span>
      <span class="tk"><svg><use href="#t-view"/></svg></span>
      <span class="tk run"><svg><use href="#t-ie"/></svg></span>
      <span class="tk"><svg><use href="#t-edge"/></svg></span>
      <span class="tk run"><svg><use href="#t-folder"/></svg></span>
      <span class="tk"><svg><use href="#t-store"/></svg></span>
      <span class="tk run"><svg><use href="#t-chrome"/></svg></span>
      <span class="tk run"><svg><use href="#t-note"/></svg></span>
      <span class="tk"><svg><use href="#t-cmd"/></svg></span>
      <span class="tk"><svg><use href="#t-calc"/></svg></span>
      <span class="tk"><svg><use href="#t-mail"/></svg></span>
      <span class="tk run"><svg><use href="#t-pc"/></svg></span>
      <span class="tk run"><svg><use href="#t-perf"/></svg></span>
      <span class="tk run"><svg><use href="#t-tv"/></svg></span>
      <span class="tk run"><svg><use href="#t-ol"/></svg></span>
      <span class="tk run"><svg><use href="#t-tree"/></svg></span>
      <span class="tk run active"><svg><use href="#t-xl"/></svg></span>
      <span class="tk run"><svg><use href="#t-app"/></svg></span>
      <span class="tk narrow"><svg><use href="#t-yel"/></svg></span>
      <span class="tk run"><svg><use href="#t-fp"/></svg></span>
      <div class="tray">
        <svg class="tray-ic w20" viewBox="0 0 14 8"><path d="M1 7L7 1L13 7" fill="none" stroke="#ddd" stroke-width="1.200"/></svg>
        <svg class="tray-ic w26" viewBox="0 0 14 14"><path d="M0 0H14V14H0Z" fill="#25b7b7"/><ellipse cx="7" cy="7" rx="5.500" ry="3" fill="#333"/><circle cx="5" cy="7" r="1.500" fill="#ccc"/><circle cx="9" cy="7" r="1.500" fill="#ccc"/></svg>
        <svg class="tray-ic w24" viewBox="0 0 16 14"><path d="M4 1H15.500V10H4ZM10 10V13M6 13.500H14" fill="none" stroke="#eee"/><path d="M.5 1H6V6H.5Z" fill="#000" stroke="#eee"/></svg>
        <svg class="tray-ic w24" viewBox="0 0 16 14"><path d="M1 5H3L7 1V13L3 9H1Z" fill="none" stroke="#eee"/><path d="M9 4Q11 7 9 10M11 2Q14 7 11 12" fill="none" stroke="#aaa"/><path d="M13.500 1Q16.500 7 13.500 13" fill="none" stroke="#555"/></svg>
        <span class="eng">ENG</span>
        <div class="clock">11:11<br>12/6/2017</div>
        <svg class="notif" viewBox="0 0 16 15"><path d="M.5 .5H15.500V11H11L8 14L5 11H.5Z" fill="none" stroke="#eee"/></svg>
        <i class="show-desk"></i>
      </div>
    </div>
  </section>
</main>

</body>
</html>
```

FILE: styles.css
```css
* {
  box-sizing: border-box;
}

body {
  margin: 0;
  background: #fff;
  font-family: "Noto Sans", "Noto Sans CJK TC", sans-serif;
  font-size: 12px;
  color: #444;
}

.defs {
  position: absolute;
  width: 0;
  height: 0;
}

svg {
  display: block;
  flex: none;
}

.desktop {
  display: flex;
  width: 3840px;
  height: 1080px;
  overflow: hidden;
}

.window {
  position: relative;
  display: flex;
  flex-direction: column;
  width: 1920px;
  height: 1080px;
  background: #fff;
}

.i10 { width: 10px; height: 10px; }
.i14 { width: 14px; height: 14px; }
.i16 { width: 16px; height: 16px; }
.i18 { width: 18px; height: 16px; }
.faded { opacity: 0.45; }

.dd {
  display: inline-block;
  width: 0;
  height: 0;
  border-left: 3px solid transparent;
  border-right: 3px solid transparent;
  border-top: 4px solid #666;
}

.dd-line {
  box-shadow: 0 -3px 0 -2px #666;
}

/* title row */
.hearts {
  position: absolute;
  right: 0;
  top: 0;
  width: 507px;
  height: 48px;
}

.titlebar {
  position: relative;
  display: grid;
  grid-template-columns: 1fr auto 1fr;
  align-items: center;
  height: 25px;
}

.qat {
  display: grid;
  align-items: center;
  justify-items: start;
}

.qat-x {
  padding-left: 10px;
  grid-template-columns: 30px 29px 20px 20px 20px 21px 32px 24px 8px;
}

.qat-w {
  padding-left: 9px;
  grid-template-columns: 31px 29px 20px 19px 30px 28px 8px;
}

.doc-title {
  white-space: pre;
}

.faded-title {
  color: #b5b5b5;
}

.win-ctl {
  display: grid;
  grid-template-columns: repeat(5, 30px);
  justify-content: end;
  justify-items: center;
  align-items: center;
}

.ctl-q {
  font-weight: 700;
  font-size: 14px;
  color: #555;
}

.ctl-min {
  width: 8px;
  height: 3px;
  margin-top: 4px;
  background: #444;
}

.dim .ctl-q { color: #bbb; }
.dim .ctl-min { background: #bbb; }

.tabs-row {
  position: relative;
  display: flex;
  align-items: center;
  height: 25px;
}

.tabs-row.lined {
  border-bottom: 1px solid #d4d4d4;
  height: 26px;
  margin-bottom: -1px;
}

.file-tab {
  width: 59px;
  height: 25px;
  margin-right: 2px;
  line-height: 25px;
  text-align: center;
  color: #fff;
}

.excel .file-tab { background: #217346; }
.word .file-tab { background: #2b579a; }

.tab {
  padding: 0 15px 0 14.5px;
  line-height: 25px;
  white-space: nowrap;
}

.cur-tab {
  height: 26px;
  padding: 0 14px;
  margin: 0 0 -1px 2px;
  color: #2b579a;
  background: #fff;
  border: 1px solid #d4d4d4;
  border-bottom: 0;
}

.user {
  display: flex;
  align-items: center;
  margin-left: auto;
  padding-right: 12px;
  color: #555;
}

.user .dd {
  margin: 0 8px 0 7px;
}

.duck {
  width: 20px;
  height: 22px;
}

/* formula bar */
.formula-bar {
  display: flex;
  height: 28px;
  margin: 17px 6px 10px 5px;
}

.name-box {
  display: flex;
  align-items: center;
  justify-content: space-between;
  width: 219px;
  padding: 0 7px;
  border: 1px solid #c6c6c6;
  font-size: 13px;
}

.fx-dots {
  width: 30px;
  margin: 9px 0;
  background: radial-gradient(circle, #999 1px, transparent 1.200px) center / 3px 4px repeat-y;
}

.fx-btns {
  display: flex;
  align-items: center;
  justify-content: space-around;
  width: 110px;
  padding: 0 4px;
  border: 1px solid #c6c6c6;
}

.fx {
  font-family: "Liberation Serif", serif;
  font-size: 17px;
  color: #555;
}

.fx-input {
  display: flex;
  align-items: center;
  justify-content: flex-end;
  flex: 1;
  margin-left: 3px;
  padding-right: 3px;
  border: 1px solid #c6c6c6;
}

/* sheet */
.sheet {
  display: flex;
  height: 885px;
  overflow: hidden;
}

.cells {
  position: relative;
  width: 1899px;
}

.colhead {
  display: grid;
  grid-template-columns: 20px 4px 138px 18px 240px 107px 4px repeat(32, 42.75px);
  height: 12px;
  border-bottom: 1px solid #9a9a9a;
  font-family: "Liberation Serif", serif;
  font-size: 10.5px;
  line-height: 11px;
  color: #6f6f6f;
  text-align: center;
}

.colhead span {
  overflow: hidden;
  border-left: 1px solid #d9d9d9;
}

.colhead .cur {
  background: #dcdcdc;
  border-bottom: 2px solid #217346;
  color: #217346;
  font-weight: 700;
}

.rows {
  height: 873px;
  overflow: hidden;
  background:
    linear-gradient(#d4d4d4, #d4d4d4) 20px 0 / 1px 100% no-repeat,
    linear-gradient(#d4d4d4, #d4d4d4) 24px 0 / 1px 100% no-repeat,
    linear-gradient(#d4d4d4, #d4d4d4) 162px 0 / 1px 100% no-repeat,
    linear-gradient(#d4d4d4, #d4d4d4) 180px 0 / 1px 100% no-repeat,
    linear-gradient(#d4d4d4, #d4d4d4) 420px 0 / 1px 100% no-repeat,
    linear-gradient(#d4d4d4, #d4d4d4) 527px 0 / 1px 100% no-repeat,
    repeating-linear-gradient(90deg, #d4d4d4 0 1px, transparent 1px 42.75px) 531px 0 / 1368px 100% no-repeat;
}

.row {
  display: grid;
  grid-template-columns: 20px 4px 138px 18px 240px 107px 4px;
  border-bottom: 1px solid #d4d4d4;
  font-family: "Liberation Sans", sans-serif;
  font-size: 10.7px;
  color: #111;
  white-space: nowrap;
}

.row.tiny { height: 4px; }
.row.h5 { height: 5px; }
.row.h6 { height: 6px; }
.row.h10 { height: 10px; }
.row.h12 { height: 12px; }
.row.h13 { height: 13px; }
.row.h18 { height: 18px; }
.row.h26 { height: 26px; }
.row.h27 { height: 27px; }
.row.h30 { height: 30px; }

.row b {
  grid-column: 1;
  align-self: end;
  font-family: "Liberation Serif", serif;
  font-weight: 400;
  font-size: 11px;
  line-height: 11px;
  color: #7a7a7a;
  text-align: center;
  overflow: hidden;
}

.row.cur b {
  align-self: stretch;
  padding-top: 6px;
  background: #dcdcdc;
  border-right: 2px solid #217346;
  color: #217346;
  font-weight: 700;
}

.bar {
  grid-column: 2 / -1;
  height: 3px;
}

.b1 { background-color: #808080; }
.b2 { background-color: #989898; }
.b3 { background-color: #bbbbbb; }

.b1, .b2, .b3 {
  background-image: repeating-linear-gradient(90deg, rgba(255, 255, 255, 0.8) 0 1px, transparent 1px 2px);
  background-size: 35px 1px;
  background-position: 4px 1px;
  background-repeat: no-repeat;
}

.cb, .cc, .cd, .ce, .cs, .cf {
  display: flex;
  align-items: center;
  padding-left: 3px;
}

.cb { grid-column: 3; }
.cc { grid-column: 4; color: #777; padding-left: 4px; }
.cd { grid-column: 5; }
.ce { grid-column: 6; justify-content: flex-end; padding-right: 2px; }
.cs { grid-column: 6; }
.cf { grid-column: 7; }

.title {
  font-size: 14.5px;
  font-weight: 700;
  text-decoration: underline;
}

.head .cb, .head .cc, .head .cd, .head .ce {
  box-shadow: 0 1px #000;
}

.sig .cb, .sig .cs, .sig .cf {
  box-shadow: 0 -1px #000;
}

.wage-box {
  position: absolute;
  left: 20px;
  top: 304px;
  width: 512px;
  height: 437px;
  border: 1px solid #000;
}

.cell-cursor {
  position: absolute;
  left: 703px;
  top: 273px;
  width: 45px;
  height: 20px;
  border: 2px solid #217346;
}

.vscroll {
  display: flex;
  flex-direction: column;
  width: 21px;
  padding: 2px 3px 0 4px;
  background: linear-gradient(#f0f0f0, #f0f0f0) 4px 0 / 14px 100% no-repeat;
}

.sb-btn {
  display: flex;
  align-items: center;
  justify-content: center;
  flex: none;
  width: 14px;
  height: 14px;
  background: #fff;
  border: 1px solid #ababab;
}

.sb-thumb {
  height: 568px;
  margin: 11px 0 269px;
  background: #fff;
  border: 1px solid #ababab;
}

.tri {
  display: block;
  width: 0;
  height: 0;
  border-style: solid;
  border-color: transparent;
}

.tri.up { border-width: 0 4px 5px; border-bottom-color: #666; }
.tri.down { border-width: 5px 4px 0; border-top-color: #666; }
.tri.rgt { border-width: 4px 0 4px 5px; border-left-color: #666; }
.tri.pale { border-bottom-color: #ccc; }
.tri.barred { box-shadow: 0 -3px 0 -1px #666; }

.sheet-tabs {
  display: flex;
  align-items: flex-start;
  height: 28px;
  background: #f3f3f3;
  border-top: 1px solid #ababab;
}

.arrow {
  width: 0;
  height: 0;
  margin-top: 9px;
  border-style: solid;
  border-color: transparent;
}

.arrow.left { margin-left: 26px; border-width: 5px 5px 5px 0; border-right-color: #c4c4c4; }
.arrow.right { margin-left: 23px; border-width: 5px 0 5px 5px; border-left-color: #c4c4c4; }

.stab {
  width: 67px;
  height: 23px;
  line-height: 22px;
  font-size: 13px;
  text-align: center;
  border-right: 1px solid #a0a0a0;
}

.arrow.right + .stab {
  margin-left: 38px;
}

.stab.on {
  height: 24px;
  background: #fff;
  border-right: 0;
  border-bottom: 2px solid #217346;
  color: #217346;
}

.add-sheet {
  width: 16px;
  height: 16px;
  margin: 5px 0 0 34px;
}

.hscroll {
  display: flex;
  margin: 6px 21px 0 auto;
  width: 899px;
  height: 15px;
  border: 1px solid #ababab;
  border-right: 0;
  background: #fff;
}

.h-thumb { flex: 1; }
.h-track { width: 19px; background: #e8e8e8; }
.hscroll .sb-btn { width: 15px; height: 14px; }

/* status bar */
.status {
  display: flex;
  align-items: center;
  height: 22px;
  color: #fff;
}

.excel .status { background: #217346; }
.word .status { background: #2b579a; }

.st-text {
  margin-left: 7px;
  white-space: nowrap;
}

.st-macro {
  width: 14px;
  height: 18px;
  margin-left: 20px;
}

.wc { margin-left: 8px; }
.st-book { margin-left: 19px; }
.lang { margin-left: 16px; }

.st-right {
  display: grid;
  grid-template-columns: 38px 38px 38px 15px 100px 16px 52px;
  align-items: center;
  justify-items: center;
  height: 22px;
  margin-left: auto;
}

.view {
  display: flex;
  align-items: center;
  justify-content: center;
  width: 38px;
  height: 21px;
  margin-top: 1px;
}

.view.on { background: #0f6637; }
.view.on-w { background: #1e4a8a; }

.z-btn {
  font-size: 15px;
  font-weight: 700;
  line-height: 20px;
}

.slider {
  position: relative;
  width: 100px;
  height: 1px;
  background: #fff;
}

.knob {
  position: absolute;
  top: -5px;
  width: 4px;
  height: 11px;
  background: #fff;
}

.k60 { left: 27px; }
.k100 { left: 48px; }

.pct {
  color: #e0e0e0;
}

/* taskbar */
.taskbar {
  display: flex;
  height: 40px;
  background: #000;
}

.tk {
  position: relative;
  display: flex;
  align-items: center;
  justify-content: center;
  width: 49px;
  height: 40px;
}

.tk.first { width: 47px; }
.tk.narrow { width: 45px; }

.tk svg {
  width: 24px;
  height: 24px;
}

.tk.run::after {
  content: "";
  position: absolute;
  left: 4px;
  right: 4px;
  bottom: 0;
  height: 2px;
  background: #99ccf0;
}

.tk.active {
  background: #333;
}

.tk.active::after {
  left: 0;
  right: 0;
}

.tray {
  display: flex;
  align-items: center;
  margin-left: auto;
  color: #e4e4e4;
}

.tray-ic { height: 16px; }
.tray-ic.w20 { width: 20px; height: 8px; padding: 0 3px; }
.tray-ic.w26 { width: 26px; height: 15px; }
.tray-ic.w24 { width: 24px; height: 15px; }

.eng {
  width: 36px;
  text-align: center;
}

.clock {
  width: 74px;
  line-height: 17px;
  text-align: center;
}

.notif {
  width: 16px;
  height: 15px;
  margin: 0 11px;
}

.show-desk {
  display: block;
  width: 1px;
  height: 40px;
  margin: 0 4px 0 9px;
  background: #555;
}

/* ribbon */
.ribbon {
  display: flex;
  height: 94px;
  border-bottom: 1px solid #d0d0d0;
}

.group {
  display: flex;
  flex-direction: column;
  justify-content: space-between;
  height: 93px;
  border-right: 1px solid transparent;
  background: linear-gradient(#dcdcdc, #dcdcdc) right 4px / 1px 86px no-repeat;
}

.g-clip { width: 127px; }
.g-font { width: 308px; padding-left: 5px; }
.g-para { width: 267px; padding-left: 5px; }
.g-styles { width: 1110px; padding-left: 6px; }
.g-edit { width: 76px; }

.glabel {
  display: grid;
  grid-template-columns: 1fr auto 1fr;
  align-items: center;
  height: 18px;
  margin-left: -5px;
  padding: 0 4px 0 0;
  color: #666;
}

.launch {
  justify-self: end;
  width: 7px;
  height: 7px;
  border-left: 1px solid #888;
  border-bottom: 1px solid #888;
  background: linear-gradient(45deg, #666 0 30%, transparent 30%);
}

.clip-body {
  display: flex;
  padding: 7px 0 0 12px;
}

.paste {
  display: flex;
  flex-direction: column;
  align-items: center;
  width: 32px;
  color: #333;
}

.paste-ic {
  width: 30px;
  height: 30px;
  margin-bottom: 1px;
}

.paste span:nth-child(2) {
  line-height: 18px;
  margin-top: 1px;
}

.paste .dd {
  margin-top: 6px;
}

.clip-list {
  margin-left: 6px;
}

.clip-list div {
  display: flex;
  align-items: center;
  gap: 5px;
  height: 23.5px;
  color: #444;
  white-space: nowrap;
}

.clip-list .off {
  color: #aaa;
}

.tool-rows {
  padding-top: 11px;
}

.tr {
  display: grid;
  align-items: center;
  justify-items: center;
  height: 23px;
}

.tr + .tr {
  margin-top: 8px;
}

.font-r1 { grid-template-columns: 137px 22px 24px 6px 24px 8px 16px 16px 26px 16px; }
.font-r2 { grid-template-columns: 20px 24px 22px 10px 26px 20px 22px 10px 20px 8px 27px 8px 28px 6px 28px 16px; }
.para-r1 { grid-template-columns: 22px 10px 2px 34px 2px 20px 6px 18px 16px 26px 6px 24px 6px 16px 16px 16px 14px; }
.para-r2 { grid-template-columns: 22px 22px 22px 22px 22px 8px 24px 6px 14px 20px 12px 22px 12px; }

.sep {
  display: block;
  width: 1px;
  height: 22px;
  background: #dcdcdc;
}

.combo {
  display: flex;
  width: 137px;
  height: 22px;
  border: 1px solid #ababab;
  line-height: 20px;
  font-size: 12.5px;
  color: #222;
}

.combo .c1 {
  display: flex;
  align-items: center;
  justify-content: space-between;
  width: 90px;
  padding: 0 3px;
  border-right: 1px solid #ababab;
  white-space: nowrap;
  overflow: hidden;
}

.combo .c2 {
  display: flex;
  align-items: center;
  justify-content: space-between;
  flex: 1;
  padding: 0 4px;
}

.big-a {
  font-size: 16px;
  line-height: 20px;
  color: #555;
}

.big-a.sm {
  font-size: 13px;
}

.big-a sup {
  display: inline-block;
  vertical-align: top;
  margin-top: 2px;
  width: 0;
  height: 0;
  border-left: 3px solid transparent;
  border-right: 3px solid transparent;
}

.arr-up { border-bottom: 4px solid #2b6ba8; }
.arr-dn { border-top: 4px solid #2b6ba8; }

.tool-t {
  font-family: "Liberation Sans", sans-serif;
  font-size: 14px;
  color: #555;
}

.tool-t.serif {
  font-family: "Liberation Serif", serif;
  font-size: 15px;
}

.tool-t.small {
  font-size: 13px;
}

.tool-t sub, .tool-t sup {
  font-size: 7px;
  line-height: 0;
  color: #2b6ba8;
}

.tool-s {
  font-family: "Liberation Sans", sans-serif;
  font-size: 11px;
  font-weight: 700;
  color: #666;
}

.tool-cn {
  font-size: 13px;
  color: #555;
}

.tool-cn small {
  font-size: 7px;
}

.boxed-a {
  width: 16px;
  height: 18px;
  border: 1px solid #2b6ba8;
  text-align: center;
  line-height: 16px;
  font-size: 13px;
  color: #444;
}

.a-out {
  font-family: "Liberation Sans", sans-serif;
  font-size: 19px;
  font-weight: 700;
  line-height: 20px;
  color: #fff;
  -webkit-text-stroke: 1px #2b6ba8;
}

.a-bar {
  width: 16px;
  height: 19px;
  font-family: "Liberation Sans", sans-serif;
  font-size: 14px;
  font-weight: 700;
  line-height: 15px;
  text-align: center;
  color: #555;
}

.a-bar.yel { border-bottom: 4px solid #ffff00; font-size: 12px; }
.a-bar.red { border-bottom: 4px solid #ff0000; }

.a-gray {
  width: 14px;
  height: 20px;
  background: #a6a6a6;
  line-height: 20px;
  font-size: 15px;
  font-weight: 700;
  text-align: center;
  color: #444;
}

.circ-zi {
  width: 16px;
  height: 16px;
  border: 1px solid #666;
  border-radius: 50%;
  line-height: 14px;
  font-size: 10px;
  text-align: center;
}

.tool-dir {
  font-size: 15px;
  font-weight: 700;
  color: #555;
  box-shadow: 0 -3px 0 -2px #2b6ba8;
}

.sel-bg {
  display: flex;
  align-items: center;
  justify-content: space-between;
  width: 34px;
  height: 23px;
  padding: 0 3px;
  background: #c5d8f2;
}

.sel-bg.wide {
  width: 22px;
}

.gallery {
  display: flex;
  width: 1097px;
  height: 60px;
  margin-top: 6px;
  border: 2px solid #b0b0b0;
  margin-bottom: auto;
}

.gal-item {
  width: 72px;
  flex: none;
  overflow: hidden;
  text-align: center;
}

.gal-item.on {
  box-shadow: inset 0 0 0 4px #c5d8f2;
}

.smp {
  height: 40px;
  line-height: 40px;
  white-space: nowrap;
  overflow: hidden;
  color: #000;
  font-family: "Liberation Serif", serif;
}

.s-normal { font-size: 14px; }
.s-h1 { font-family: "Liberation Sans", sans-serif; font-weight: 700; font-size: 21px; }
.s-h2 { font-family: "Liberation Sans", sans-serif; font-weight: 700; font-size: 28px; }
.s-h3 { font-family: "Liberation Sans", sans-serif; font-weight: 700; font-size: 24px; }
.s-h4 { font-weight: 700; font-size: 14px; }
.s-title { font-family: "Liberation Sans", sans-serif; font-size: 21px; }
.s-sub { font-family: "Open Sans", sans-serif; font-style: italic; font-size: 13.5px; }
.s-em1 { font-style: italic; font-size: 14px; color: #444; }
.s-em2 { font-style: italic; font-size: 14px; color: #222; }
.s-em3 { font-style: italic; font-size: 14px; color: #5b9bd5; }
.s-ref { font-variant: small-caps; font-size: 14px; color: #555; }

.lined-smp {
  height: 22px;
  margin: 9px 6px;
  line-height: 20px;
  border-top: 1px solid #5b9bd5;
  border-bottom: 1px solid #5b9bd5;
}

.gal-label {
  height: 16px;
  margin-top: -4px;
  line-height: 16px;
  color: #666;
  white-space: nowrap;
}

.gal-label .pm {
  margin: 0 1px 0 0;
}

.gal-scroll {
  display: flex;
  flex-direction: column;
  width: 14px;
  flex: none;
  border-left: 1px solid #b0b0b0;
}

.gal-scroll > span {
  display: flex;
  flex: 1;
  align-items: center;
  justify-content: center;
  border-bottom: 1px solid #dcdcdc;
}

.edit-list {
  padding: 3px 0 0 8px;
}

.edit-list div {
  display: flex;
  align-items: center;
  gap: 5px;
  height: 23.5px;
  white-space: nowrap;
}

.edit-list .dd {
  margin-left: 6px;
}

.ab-ac {
  width: 16px;
  line-height: 9px;
  font-size: 10px;
  color: #444;
}

.ab-ac b {
  color: #2b6ba8;
  font-weight: 400;
}

.collapse {
  width: 10px;
  height: 6px;
  margin: 82px 0 0 13px;
}

/* ruler */
.ruler {
  position: relative;
  display: flex;
  height: 15px;
  margin-top: 4px;
  border-top: 1px solid #d8d8d8;
  border-bottom: 1px solid #d8d8d8;
  font-family: "Liberation Sans", sans-serif;
  font-size: 10.5px;
  color: #666;
}

.r-left {
  flex: none;
  width: 29px;
  margin-right: -29px;
  background: #e6e6e6;
}

.r-nums {
  display: flex;
  margin-left: 45px;
  width: 1858px;
  background: linear-gradient(90deg, #fff 0 1825px, #e2e2e2 1825px);
}

.r-nums span {
  display: flex;
  align-items: center;
  justify-content: center;
  gap: 2px;
  flex: none;
  width: 32.03px;
  line-height: 13px;
}

.r-nums span::before,
.r-nums span::after {
  content: "";
  width: 1px;
  height: 6px;
  background: #b0b0b0;
}

.marker {
  position: absolute;
  width: 10px;
}

.m-top { left: 53px; top: -1px; height: 8px; }
.m-hang { left: 90px; top: 11px; height: 18px; }
.m-right { left: 1867px; top: 8px; height: 8px; }

/* document */
.doc {
  position: relative;
  flex: 1;
  height: 855px;
  padding: 8px 0 0 30px;
  overflow: hidden;
  font-family: "Liberation Serif", "Noto Sans CJK TC", serif;
  font-size: 16px;
  color: #000;
  white-space: nowrap;
}

.pm {
  margin-left: 1px;
  font-family: "DejaVu Sans", sans-serif;
  font-size: 10px;
  line-height: 0;
  font-style: normal;
  font-weight: 400;
  color: #8a8a8a;
}

.ln {
  height: 19px;
  line-height: 19px;
}

.ln.h18 { height: 18px; line-height: 18px; }
.ln.h20 { height: 20px; line-height: 20px; }
.ln.h21 { height: 21px; line-height: 21px; }
.ln.h22 { height: 22px; line-height: 22px; }
.ln.h24 { height: 24px; line-height: 24px; }

.mt2 { margin-top: 2px; }
.mt4 { margin-top: 4px; }

.n1 { display: inline-block; width: 27.5px; }
.n3 { display: inline-block; width: 25px; }

.sub {
  display: grid;
  grid-template-columns: 38px 1fr;
  margin-left: 28px;
  line-height: 19px;
}

.sub > div {
  height: 19px;
}

.sub.multi > div {
  height: 57px;
}

.notebox {
  position: relative;
  display: grid;
  grid-template-columns: 85px 84px 1fr;
  width: 691px;
  border: 1px solid #000;
}

.notebox.clipped {
  height: 68px;
  border-top: 0;
}

.notebox.n2 {
  height: 78px;
}

.notebox.tips {
  grid-template-columns: 84px 76px 1fr;
  width: 691px;
  height: 122px;
  margin-left: 32px;
}

.nc {
  padding: 0 6px;
  border-left: 1px dashed #8a8a8a;
}

.nc-icon {
  display: flex;
  flex-direction: column;
  padding: 0 0 0 20px;
  border-left: 0;
}

.n2 .nc-icon {
  padding-top: 12px;
}

.ic-line {
  display: flex;
  align-items: flex-end;
}

.ic-line .pm {
  line-height: 12px;
}

.tips .nc-icon > .pm:first-child {
  margin: 7px 0 14px 25px;
  line-height: 12px;
}

.tips .nc-icon > .pm:last-child {
  margin: 16px 0 0 33px;
  line-height: 12px;
}

.note-ic {
  width: 43px;
  height: 49px;
}

.note-ic.cut {
  height: 32px;
}

.under {
  margin: 14px 0 0 33px;
  line-height: 12px;
}

.nt {
  font-size: 21px;
  font-weight: 700;
  line-height: 17px;
}

.mid {
  display: flex;
  align-items: center;
}

.nc-text {
  padding: 0 8px;
  line-height: 19px;
}

.nc-tips {
  line-height: 25px;
  padding: 0 7px;
  margin-top: -3px;
}

.side {
  position: absolute;
  right: -12px;
  top: 6px;
  line-height: 12px;
}

.red-ring {
  position: absolute;
  left: 29px;
  top: 178px;
  width: 77px;
  height: 64px;
}
```
